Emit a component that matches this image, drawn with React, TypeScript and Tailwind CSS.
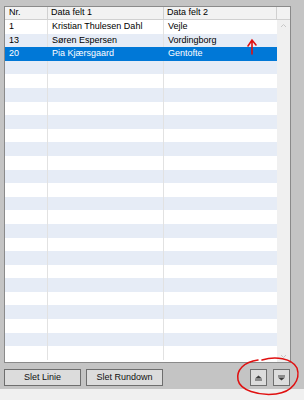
import React from "react";

const rows = [
  { nr: "1", f1: "Kristian Thulesen Dahl", f2: "Vejle" },
  { nr: "13", f1: "Søren Espersen", f2: "Vordingborg" },
  { nr: "20", f1: "Pia Kjærsgaard", f2: "Gentofte", selected: true },
];

const TOTAL_ROWS = 25;

function UpIcon() {
  return (
    <svg width="9" height="6" viewBox="0 0 9 6">
      <path d="M4.5 0.5 L8 3.5 L1 3.5 Z" fill="#3c3c3c" />
      <rect x="1" y="4.5" width="7" height="1" fill="#3c3c3c" />
    </svg>
  );
}

function DownIcon() {
  return (
    <svg width="9" height="6" viewBox="0 0 9 6">
      <rect x="1" y="0.5" width="7" height="1" fill="#3c3c3c" />
      <path d="M1 2.5 L8 2.5 L4.5 5.5 Z" fill="#3c3c3c" />
    </svg>
  );
}

export default function App() {
  const body = Array.from({ length: TOTAL_ROWS }).map((_, i) => rows[i] ?? null);

  return (
    <div
      className="relative w-[304px] h-[400px] overflow-hidden bg-[#c4c4c4] text-[9px] text-black"
      style={{ fontFamily: '"Liberation Sans", Arial, sans-serif' }}
    >
      <div className="flex flex-col pt-[6px] pl-[4px]">
        {/* Grid panel */}
        <div className="w-[287px] h-[357px] border border-[#8a8a8a] bg-white flex flex-col overflow-hidden">
          {/* Header */}
          <div className="flex h-[13px] shrink-0 bg-[#f2f2f2] border-b border-[#d0d0d0]">
            <div className="w-[43px] pl-[4px] border-r border-[#d0d0d0] flex items-center">Nr.</div>
            <div className="w-[116px] pl-[3px] border-r border-[#d0d0d0] flex items-center">Data felt 1</div>
            <div className="w-[113px] pl-[3px] border-r border-[#d0d0d0] flex items-center">Data felt 2</div>
            <div className="flex-1" />
          </div>

          {/* Body */}
          <div className="flex flex-1 min-h-0">
            <div className="flex flex-col w-[272px] overflow-hidden">
              {body.map((r, i) => {
                const bg = r?.selected
                  ? "bg-[#0078d7] text-white"
                  : i % 2 === 1
                  ? "bg-[#e6ecf6]"
                  : "bg-white";
                return (
                  <div key={i} className={`flex h-[13.6px] shrink-0 items-center ${bg}`}>
                    <div className={`w-[43px] h-full pl-[4px] flex items-center border-r ${r?.selected ? "border-[#0078d7]" : "border-[#e2e2e2]"}`}>
                      {r?.nr}
                    </div>
                    <div className={`w-[116px] h-full pl-[4px] flex items-center border-r ${r?.selected ? "border-[#0078d7]" : "border-[#e2e2e2]"}`}>
                      {r?.f1}
                    </div>
                    <div className="flex-1 h-full pl-[4px] flex items-center">{r?.f2}</div>
                  </div>
                );
              })}
            </div>
            {/* Scrollbar */}
            <div className="flex-1 bg-[#f0f0f0] flex flex-col items-center justify-between py-[3px]">
              <svg width="7" height="5" viewBox="0 0 7 5">
                <path d="M1 4 L3.5 1.5 L6 4" stroke="#c8c8c8" strokeWidth="1" fill="none" />
              </svg>
              <svg width="7" height="5" viewBox="0 0 7 5">
                <path d="M1 1 L3.5 3.5 L6 1" stroke="#c8c8c8" strokeWidth="1" fill="none" />
              </svg>
            </div>
          </div>
        </div>

        {/* Buttons */}
        <div className="flex items-center mt-[6px] h-[17px]">
          <button className="w-[77px] h-full bg-[#dcdcdc] border border-[#6e6e6e] text-[9px] text-[#111]">
            Slet Linie
          </button>
          <button className="ml-[5px] w-[77px] h-full bg-[#dcdcdc] border border-[#6e6e6e] text-[9px] text-[#111]">
            Slet Rundown
          </button>
          <button className="ml-[87px] w-[17px] h-full bg-[#dcdcdc] border border-[#6e6e6e] flex items-center justify-center">
            <UpIcon />
          </button>
          <button className="ml-[6px] w-[17px] h-full bg-[#dcdcdc] border border-[#6e6e6e] flex items-center justify-center">
            <DownIcon />
          </button>
        </div>
      </div>

      {/* lower window strip */}
      <div className="absolute left-0 right-0 bottom-0 h-[11px] bg-[#f0f0f0]" />

      {/* red annotations */}
      <svg className="absolute left-0 top-0 pointer-events-none" width="304" height="400" viewBox="0 0 304 400">
        <path d="M252 54 L252 41 M248 46 L252 40 L256 45" stroke="#e01010" strokeWidth="1.6" fill="none" strokeLinecap="round" />
        <path
          d="M262 360 C275 356 292 358 297 368 C301 380 292 392 276 394 C258 396 240 390 238 380 C236 370 244 362 258 360"
          stroke="#e01010"
          strokeWidth="1.5"
          fill="none"
          strokeLinecap="round"
        />
      </svg>
    </div>
  );
}
